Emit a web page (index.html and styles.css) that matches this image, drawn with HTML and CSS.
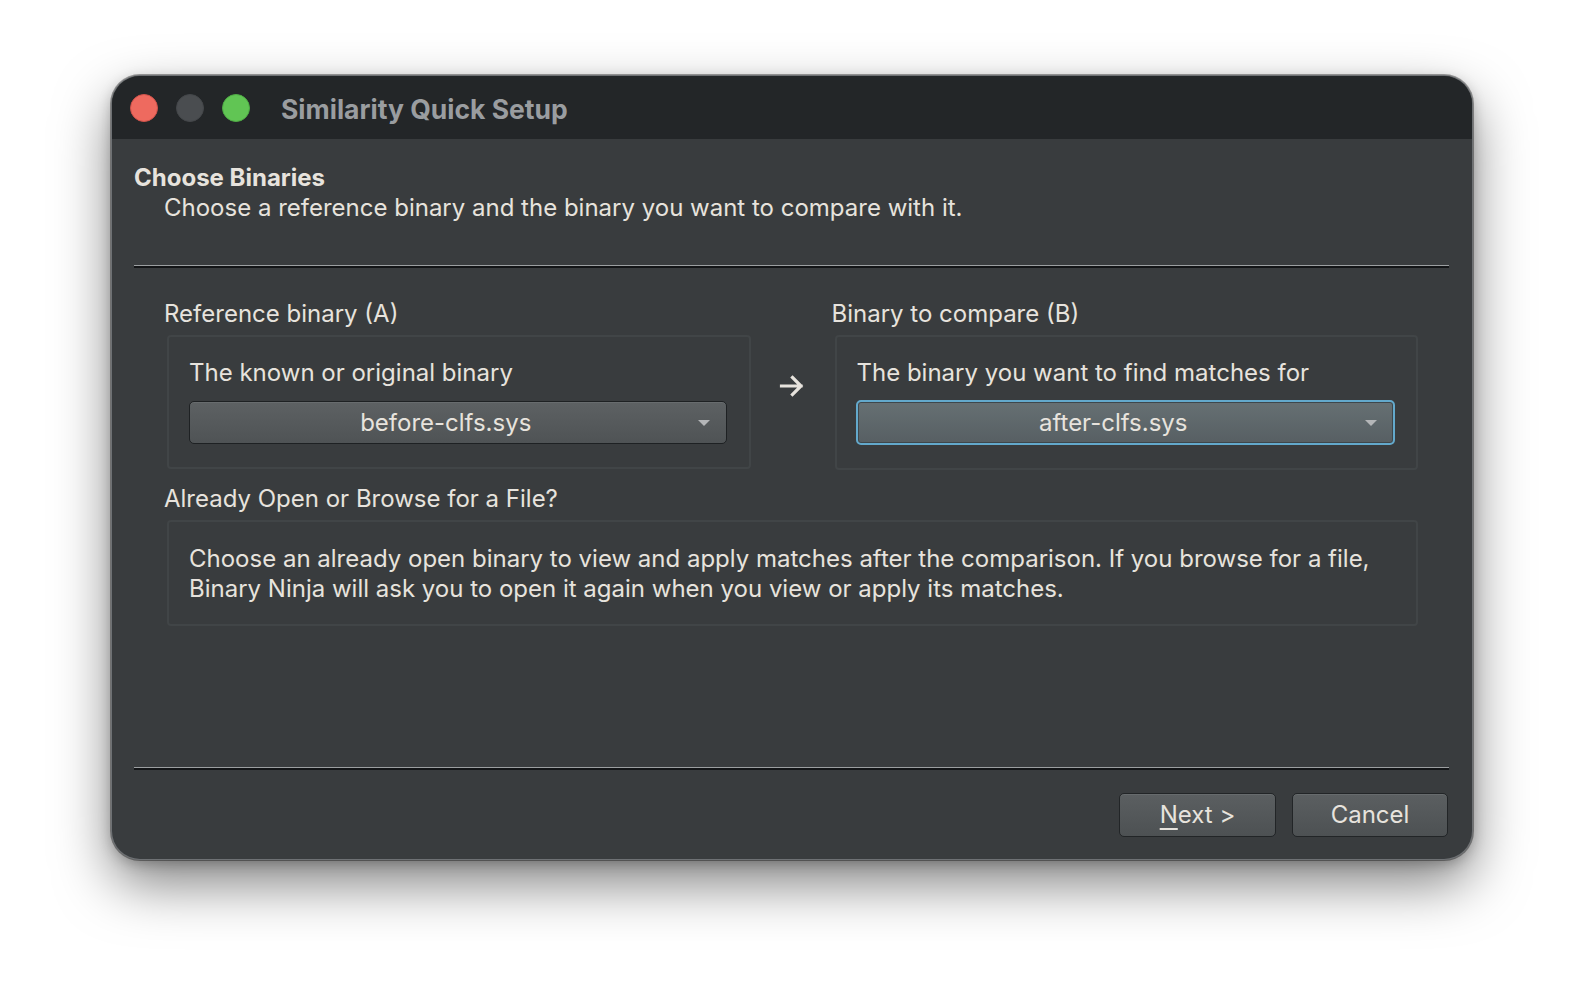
FILE: index.html
```html
<!DOCTYPE html>
<html lang="en">
<head>
<meta charset="utf-8">
<title>Similarity Quick Setup</title>
<link rel="stylesheet" href="styles.css">
</head>
<body>
<div class="window">
  <div class="titlebar">
    <div class="lights">
      <span class="light red"></span>
      <span class="light gray"></span>
      <span class="light green"></span>
    </div>
    <div class="title">Similarity Quick Setup</div>
  </div>
  <div class="content">
    <div class="header">
      <div class="h-title">Choose Binaries</div>
      <div class="h-sub">Choose a reference binary and the binary you want to compare with it.</div>
    </div>
    <div class="sep"></div>
    <div class="main">
      <div class="pick-grid">
        <div class="col">
          <div class="label">Reference binary (A)</div>
          <div class="group">
            <div class="group-text">The known or original binary</div>
            <div class="combo"><span class="combo-text">before-clfs.sys</span><span class="caret"></span></div>
          </div>
        </div>
        <div class="arrow">
          <svg width="26" height="24" viewBox="0 0 26 24"><path d="M2.5 12 H22 M13.5 3.5 L22 12 L13.5 20.5" fill="none" stroke="#e7e3dd" stroke-width="3.2" stroke-linecap="square"/></svg>
        </div>
        <div class="col">
          <div class="label">Binary to compare (B)</div>
          <div class="group">
            <div class="group-text">The binary you want to find matches for</div>
            <div class="combo focus"><span class="combo-text">after-clfs.sys</span><span class="caret"></span></div>
          </div>
        </div>
      </div>
      <div class="label label-c">Already Open or Browse for a File?</div>
      <div class="group group-note">Choose an already open binary to view and apply matches after the comparison. If you browse for a file, Binary Ninja will ask you to open it again when you view or apply its matches.</div>
    </div>
    <div class="sep"></div>
    <div class="footer">
      <button class="btn"><span class="ul">N</span>ext &gt;</button>
      <button class="btn btn-cancel">Cancel</button>
    </div>
  </div>
</div>
</body>
</html>
```

FILE: styles.css
```css
html, body {
  margin: 0;
  padding: 0;
  background: #ffffff;
}

body {
  width: 1584px;
  height: 1008px;
  overflow: hidden;
  font-family: Inter, "Noto Sans", sans-serif;
  color: #e7e3dd;
}

.window {
  box-sizing: border-box;
  margin: 76px 0 0 112px;
  width: 1360px;
  height: 783px;
  border-radius: 28px;
  background: #393c3e;
  overflow: hidden;
  display: flex;
  flex-direction: column;
  box-shadow: 0 0 0 1px #6e7174, 0 0 0 2px rgba(0,0,0,0.35), 0 24px 55px rgba(0,0,0,0.5), 0 4px 14px rgba(0,0,0,0.25);
}

.titlebar {
  height: 63px;
  flex: none;
  background: #232628;
  display: flex;
  align-items: center;
  padding-left: 18px;
}

.lights {
  display: flex;
  gap: 18px;
}

.light {
  width: 28px;
  height: 28px;
  border-radius: 50%;
  box-sizing: border-box;
}

.red { background: #ee6a5f; border: 1px solid #d0524a; }
.gray { background: #4a4d50; border: 1px solid #44474a; }
.green { background: #61c554; border: 1px solid #4fab45; }

.title {
  margin-left: 31px;
  font-size: 26.5px;
  font-weight: 700;
  color: #9a9da0;
  line-height: 34px;
  padding-top: 2px;
}

.content {
  flex: 1;
  display: flex;
  flex-direction: column;
  padding: 24px 23px 22px 22px;
  min-height: 0;
}

.h-title {
  font-size: 24px;
  font-weight: 700;
  line-height: 30px;
}

.h-sub {
  font-size: 24px;
  line-height: 30px;
  padding-left: 30px;
}

.sep {
  flex: none;
  height: 0;
  border-top: 1px solid #9c9fa1;
  border-bottom: 2px solid #131517;
}

.header + .sep {
  margin-top: 42px;
}

.main {
  flex: 1;
  padding: 0 31px 0 30px;
  margin-top: 31px;
}

.pick-grid {
  display: grid;
  grid-template-columns: 1fr 81px 1fr;
}

.label {
  font-size: 24px;
  line-height: 30px;
}

.label-c {
  margin-top: 14px;
}

.group {
  margin: 6px 0 0 3px;
  border: 2px solid #414547;
  border-radius: 4px;
  padding: 21px 22px 23px 20px;
}

.group-text {
  font-size: 24px;
  line-height: 30px;
}

.group-note {
  font-size: 24px;
  line-height: 30px;
  padding: 22px 12px 20px 20px;
}

.arrow {
  display: flex;
  align-items: center;
  justify-content: center;
  padding-top: 2px;
  padding-left: 2px;
}

.arrow svg {
  display: block;
}

.combo {
  margin-top: 13px;
  height: 43px;
  box-sizing: border-box;
  border: 1px solid #1e2123;
  border-radius: 5px;
  background: linear-gradient(#5d6163, #4f5355);
  box-shadow: inset 0 1px 0 #686c6e;
  display: flex;
  align-items: center;
  justify-content: center;
  padding-right: 24px;
  position: relative;
  font-size: 24px;
}

.combo-text {
  line-height: 30px;
  margin-top: 1px;
}

.combo.focus {
  border: 2px solid #63a9cc;
  background: linear-gradient(#667073, #575f63);
  box-shadow: inset 0 0 0 1px #3f474b;
  height: 45px;
  margin-top: 12px;
  margin-left: -1px;
  margin-right: -1px;
}

.caret {
  position: absolute;
  right: 16px;
  top: 50%;
  margin-top: -3px;
  width: 0;
  height: 0;
  border-left: 6px solid transparent;
  border-right: 6px solid transparent;
  border-top: 6px solid #b4b6b8;
}

.footer {
  flex: none;
  margin-top: 23px;
  margin-right: 1px;
  display: flex;
  justify-content: flex-end;
  gap: 16px;
}

.btn {
  width: 157px;
  height: 44px;
  box-sizing: border-box;
  border: 1px solid #222527;
  border-radius: 5px;
  background: linear-gradient(#5b5f61, #4d5153);
  box-shadow: inset 0 1px 0 #676b6d;
  color: #e7e3dd;
  font-family: Inter, "Noto Sans", sans-serif;
  font-size: 24px;
  line-height: 30px;
  padding: 0;
}

.btn-cancel {
  width: 156px;
}

.ul {
  text-decoration: underline;
  text-underline-offset: 5px;
  text-decoration-thickness: 2px;
}
```
